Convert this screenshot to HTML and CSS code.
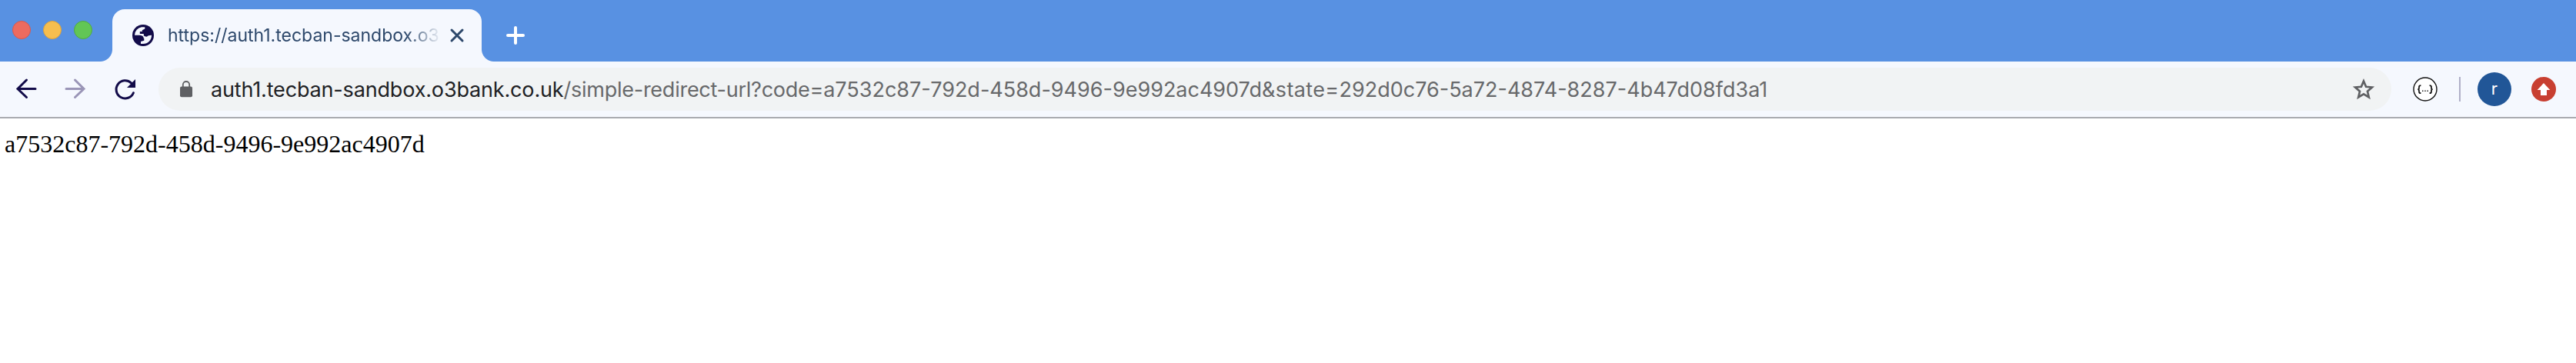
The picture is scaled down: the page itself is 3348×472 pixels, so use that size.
FILE: index.html
```html
<!DOCTYPE html>
<html lang="en">
<head>
<meta charset="utf-8">
<title>auth1.tecban-sandbox.o3bank.co.uk</title>
<link rel="stylesheet" href="styles.css">
</head>
<body>
<header class="tabstrip">
  <div class="lights"><i class="light red"></i><i class="light yellow"></i><i class="light green"></i></div>
  <div class="tab">
    <svg class="globe" width="28" height="28" viewBox="0 0 28 28"><circle cx="14" cy="14" r="14" fill="#120b49"/><path fill="#f5f8fe" d="M3 13.700A11 11 0 0 1 12 3.200H16.300V5.500L12.800 7.200V9H9.800V12H14.800V14.300Q16.500 16 19.200 15.600Q20.500 13.600 25 13.700A11 11 0 0 1 14 25H11V22L15.300 20.800V18H14.800Q14.500 14 10 13.700Z"/></svg>
    <span class="title">https://auth1.tecban-sandbox.o3</span>
    <svg class="close" width="18" height="18" viewBox="0 0 18 18"><path d="M2 2l14 14M16 2L2 16" stroke="#2d486b" stroke-width="3" stroke-linecap="round"/></svg>
  </div>
  <svg class="plus" width="24" height="24" viewBox="0 0 24 24"><path d="M12 2v20M2 12h20" stroke="#fff" stroke-width="4" stroke-linecap="round"/></svg>
</header>
<nav class="toolbar">
  <svg class="back" width="26" height="26" viewBox="0 0 26 26"><path d="M25 13.500H2M13.500 2L2 13.500l11.500 11" /></svg>
  <svg class="forward" width="26" height="26" viewBox="0 0 26 26"><path d="M1 13.500h23M12.500 2l11.500 11.500-11.500 11"/></svg>
  <svg class="reload" width="28" height="28" viewBox="0 0 28 28"><path class="arc" d="M24.400 18.700A11.600 11.600 0 1 1 21.500 5.800"/><path fill="#120b49" d="M27 1v11H16z"/></svg>
  <div class="omnibox">
    <svg class="lock" width="16" height="22" viewBox="0 0 16 22"><rect y="7.500" width="16" height="13.800" rx="2" fill="#5f6063"/><path d="M3.800 8V5.200a4.200 4.200 0 0 1 8.400 0V8" fill="none" stroke="#5f6063" stroke-width="1.800"/></svg>
    <div class="url"><span class="host">auth1.tecban-sandbox.o3bank.co.uk</span><span class="path">/simple-redirect-url?code=</span><span class="value">a7532c87-792d-458d-9496-9e992ac4907d</span><span class="param">&amp;state=</span><span class="value">292d0c76-5a72-4874-8287-4b47d08fd3a1</span></div>
    <svg class="star" width="30" height="29" viewBox="0 0 30 29"><path d="M15 3.500l3.100 7.300 7.800.7-5.900 5.200 1.800 7.700-6.800-4.100-6.800 4.100 1.800-7.700-5.900-5.200 7.800-.7z" fill="none" stroke="#5f6063" stroke-width="2.700"/></svg>
  </div>
  <svg class="extension" width="32" height="32" viewBox="0 0 32 32"><circle cx="16" cy="16" r="15" fill="#fff" stroke="#111" stroke-width="1.400"/><path d="M10.400 11.200q-2.400 0-2.400 2v1.300q0 1.700-1.700 1.700 1.700 0 1.700 1.700v1.300q0 2 2.400 2M21.600 11.200q2.400 0 2.400 2v1.300q0 1.700 1.700 1.700-1.700 0-1.700 1.700v1.300q0 2-2.400 2" fill="none" stroke="#111" stroke-width="1.700"/><path d="M12.100 18.200h1.400m1.800 0h1.400m1.800 0h1.400" stroke="#111" stroke-width="1.400"/></svg>
  <i class="divider"></i>
  <div class="avatar">r</div>
  <svg class="update" width="32" height="32" viewBox="0 0 32 32"><circle cx="16" cy="16" r="16" fill="#c83f31"/><path fill="#fff" d="M16 8l8.300 9H20v7h-8v-7H7.700z"/></svg>
</nav>
<main class="page">a7532c87-792d-458d-9496-9e992ac4907d</main>
</body>
</html>
```

FILE: styles.css
```css
* { box-sizing: border-box; }
body { margin: 0; height: 472px; overflow: hidden; background: #fff; font-family: Inter, "Liberation Sans", sans-serif; }
svg { display: block; flex: none; overflow: visible; }
.tabstrip { height: 80px; padding: 12px 0 0 16px; display: flex; background: #5891e2; }
.lights { display: flex; gap: 16px; padding-top: 15px; width: 130px; }
.light { width: 24px; height: 24px; border-radius: 50%; border: 1px solid; }
.red { background: #ed6b5f; border-color: #d8584e; }
.yellow { background: #f6be4f; border-color: #dca23c; }
.green { background: #62c655; border-color: #50aa43; }
.tab { position: relative; flex: 0 0 480px; height: 68px; padding-left: 26px; display: flex; align-items: center; background: #f5f8fe; border-radius: 16px 16px 0 0; }
.tab::before, .tab::after { content: ""; position: absolute; bottom: 0; width: 16px; height: 16px; }
.tab::before { left: -16px; background: radial-gradient(circle at 0 0, transparent 15.5px, #f5f8fe 16.5px); }
.tab::after { right: -16px; background: radial-gradient(circle at 100% 0, transparent 15.5px, #f5f8fe 16.5px); }
.title { flex: none; width: 357px; margin-left: 18px; height: 34px; white-space: nowrap; font-size: 23px; line-height: 34px; color: #2d486b; -webkit-mask-image: linear-gradient(to right, #000 310px, transparent 356px); mask-image: linear-gradient(to right, #000 310px, transparent 356px); }
.close { margin-left: 10px; }
.plus { margin: 22px 0 0 32px; }
.toolbar { height: 74px; padding: 8px 0 8px 21px; display: flex; align-items: flex-start; background: #f5f8fe; border-bottom: 2px solid #a9abb0; }
.back, .forward { margin-top: 14px; fill: none; stroke: #120b49; stroke-width: 3; stroke-linecap: round; }
.forward { margin-left: 38px; stroke: #9a95b7; }
.reload { margin: 14px 0 0 38px; }
.arc { fill: none; stroke: #120b49; stroke-width: 3; stroke-linecap: round; }
.omnibox { flex: none; width: 2902px; height: 56px; margin-left: 29px; padding: 0 21px 0 28px; display: flex; align-items: center; background: #f1f3f4; border-radius: 28px; }
.url { flex: 1; margin-left: 24px; padding-top: 1px; font-size: 27px; line-height: 40px; white-space: nowrap; color: #68696b; }
.host { color: #202124; letter-spacing: -0.16px; }
.path { letter-spacing: -0.25px; }
.value { letter-spacing: 0; }
.param { letter-spacing: 0.35px; }
.extension { margin: 12px 0 0 28px; }
.divider { width: 2px; height: 32px; margin: 12px 0 0 28px; background: #b0b0c8; }
.avatar { width: 44px; height: 44px; margin: 6px 0 0 22px; border-radius: 50%; background: #215697; color: #fff; font-size: 22px; line-height: 43px; text-align: center; }
.update { margin: 12px 0 0 26px; }
.page { padding: 15px 6px; font: 32px/37px "Liberation Serif", serif; color: #000; }
```
